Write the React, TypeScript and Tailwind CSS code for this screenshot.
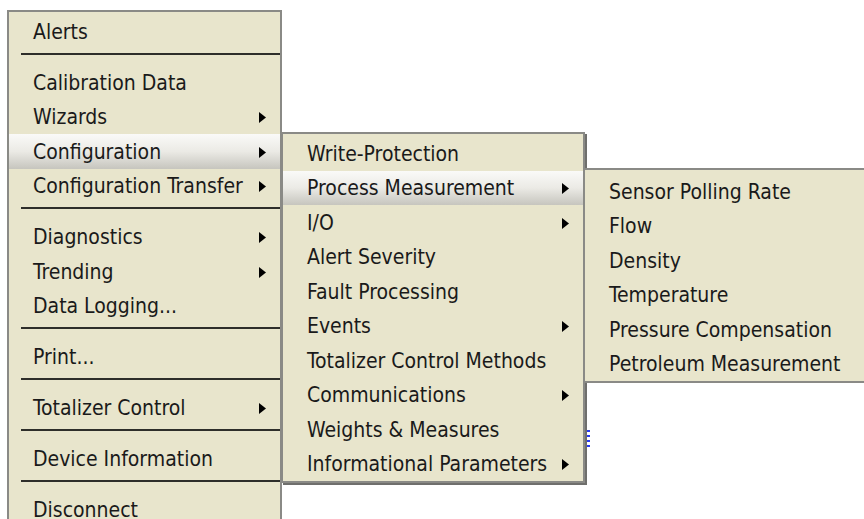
import React from 'react';

type Entry = { label: string; sub?: boolean; active?: boolean } | 'sep';

const mainMenu: Entry[] = [
  { label: 'Alerts' },
  'sep',
  { label: 'Calibration Data' },
  { label: 'Wizards', sub: true },
  { label: 'Configuration', sub: true, active: true },
  { label: 'Configuration Transfer', sub: true },
  'sep',
  { label: 'Diagnostics', sub: true },
  { label: 'Trending', sub: true },
  { label: 'Data Logging...' },
  'sep',
  { label: 'Print...' },
  'sep',
  { label: 'Totalizer Control', sub: true },
  'sep',
  { label: 'Device Information' },
  'sep',
  { label: 'Disconnect' },
];

const configMenu: Entry[] = [
  { label: 'Write-Protection' },
  { label: 'Process Measurement', sub: true, active: true },
  { label: 'I/O', sub: true },
  { label: 'Alert Severity' },
  { label: 'Fault Processing' },
  { label: 'Events', sub: true },
  { label: 'Totalizer Control Methods' },
  { label: 'Communications', sub: true },
  { label: 'Weights & Measures' },
  { label: 'Informational Parameters', sub: true },
];

const processMenu: Entry[] = [
  { label: 'Sensor Polling Rate' },
  { label: 'Flow' },
  { label: 'Density' },
  { label: 'Temperature' },
  { label: 'Pressure Compensation' },
  { label: 'Petroleum Measurement' },
];

function Arrow() {
  return (
    <svg width="7" height="11" viewBox="0 0 7 11" className="shrink-0">
      <polygon points="0,0 7,5.5 0,11" fill="#000" />
    </svg>
  );
}

function MenuList({ items }: { items: Entry[] }) {
  return (
    <>
      {items.map((item, i) =>
        item === 'sep' ? (
          <div key={i} className="h-[16.5px] pt-[4px] pl-[12px]">
            <div className="h-[2px] bg-[#2e2e2a]" />
          </div>
        ) : (
          <div
            key={i}
            className={
              'h-[34.5px] flex items-center justify-between pl-[24px] pr-[14px] pt-[2px] ' +
              (item.active ? 'bg-linear-to-b from-[#fafaf8] via-[#ebeae5] to-[#c6c5be]' : '')
            }
          >
            <span className="whitespace-nowrap">{item.label}</span>
            {item.sub && <Arrow />}
          </div>
        )
      )}
    </>
  );
}

export default function App() {
  return (
    <div
      className="relative w-[864px] h-[519px] overflow-hidden bg-white text-[#1a1a1a] text-[21px]"
      style={{ fontFamily: '"DejaVu Sans Condensed", "Liberation Sans", sans-serif' }}
    >
      {/* main context menu */}
      <div className="ml-[7px] mt-[10px] w-[275px] h-[540px] bg-[#e8e5cc] border-2 border-[#8a8a86] pt-[2px]">
        <MenuList items={mainMenu} />
      </div>

      {/* bit of the window behind */}
      <div className="absolute left-[586px] top-[430px] flex flex-col gap-[3px]">
        <div className="w-[4px] h-[2px] bg-[#2a3cf0]" />
        <div className="w-[4px] h-[2px] bg-[#2a3cf0]" />
        <div className="w-[4px] h-[2px] bg-[#2a3cf0]" />
        <div className="w-[4px] h-[2px] bg-[#2a3cf0]" />
      </div>

      {/* Configuration submenu */}
      <div className="absolute left-[281px] top-[132px] w-[304px] bg-[#e8e5cc] border-2 border-[#8a8a86] pt-[2px] shadow-[2px_2px_0_#6f6f6c]">
        <MenuList items={configMenu} />
      </div>

      {/* Process Measurement submenu */}
      <div className="absolute left-[583px] top-[168px] w-[300px] bg-[#e8e5cc] border-2 border-[#8a8a86] pt-[4px]">
        <MenuList items={processMenu} />
      </div>
    </div>
  );
}
